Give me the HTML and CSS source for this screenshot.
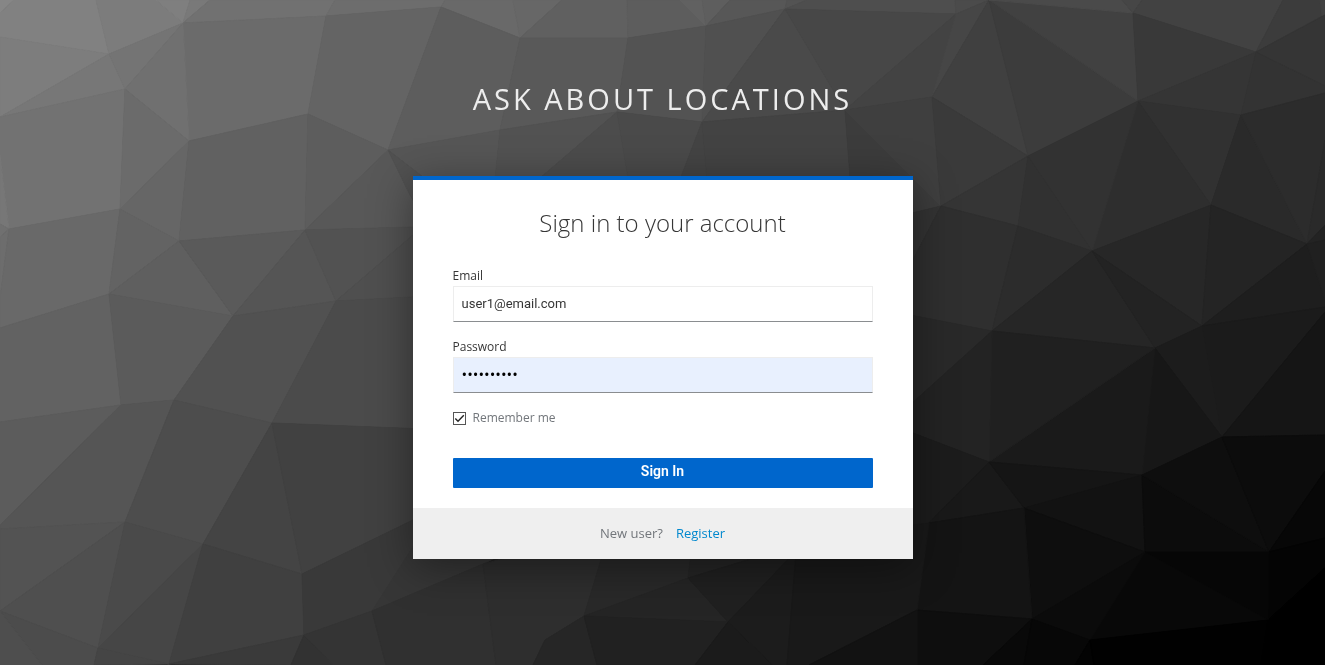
FILE: index.html
```html
<!DOCTYPE html>
<html lang="en">
<head>
<meta charset="utf-8">
<meta name="viewport" content="width=device-width, initial-scale=1">
<title>Sign in to Ask About Locations</title>
<link rel="stylesheet" href="styles.css">
</head>
<body>
<svg class="backdrop" viewBox="0 0 1325 665" preserveAspectRatio="xMidYMid slice" aria-hidden="true">
  <!-- top left -->
  <polygon color="#868686" points="0,0 14,0 0,13"/>
  <polygon color="#818181" points="14,0 96,0 109,54 0,37 0,13"/>
  <polygon color="#7d7d7d" points="0,37 109,54 0,117"/>
  <polygon color="#7c7c7c" points="96,0 156,0 183,23 109,54"/>
  <polygon color="#7f7f7f" points="156,0 190,0 183,23"/>
  <polygon color="#797979" points="190,0 210,0 183,23"/>
  <polygon color="#717171" points="210,0 335,0 326,16 183,23"/>
  <polygon color="#777777" points="0,117 109,54 125,89"/>
  <polygon color="#747474" points="109,54 183,23 125,89"/>
  <polygon color="#6d6d6d" points="335,0 445,0 441,7 326,16"/>
  <polygon color="#6b6b6b" points="183,23 326,16 308,114 189,141"/>
  <polygon color="#707070" points="125,89 183,23 189,141"/>
  <polygon color="#646464" points="326,16 441,7 388,150 308,114"/>
  <polygon color="#727272" points="0,117 125,89 120,209 9,229 0,155"/>
  <polygon color="#777777" points="0,155 9,229 0,224"/>
  <polygon color="#707070" points="0,224 9,229 0,237"/>
  <polygon color="#6b6b6b" points="125,89 189,141 120,209"/>
  <polygon color="#666666" points="120,209 189,141 179,241"/>
  <polygon color="#616161" points="189,141 308,114 305,230 179,241"/>
  <polygon color="#5d5d5d" points="308,114 388,150 305,230"/>
  <polygon color="#6d6d6d" points="0,237 9,229 0,298"/>
  <polygon color="#696969" points="9,229 120,209 109,294 0,328 0,298"/>
  <polygon color="#636363" points="120,209 179,241 109,294"/>
  <polygon color="#5f5f5f" points="109,294 179,241 233,316"/>
  <polygon color="#5a5a5a" points="179,241 305,230 233,316"/>
  <polygon color="#555555" points="305,230 336,301 233,316"/>
  <polygon color="#585858" points="305,230 388,150 414,203 450,226"/>
  <polygon color="#525252" points="305,230 450,226 413,235 336,301"/>
  <polygon color="#4f4f4f" points="336,301 413,235 450,226 450,295"/>
  <!-- lower left -->
  <polygon color="#626262" points="0,328 109,294 121,405 0,422"/>
  <polygon color="#5b5b5b" points="109,294 233,316 174,400 121,405"/>
  <polygon color="#515151" points="233,316 336,301 272,423 174,400"/>
  <polygon color="#4b4b4b" points="336,301 450,295 450,430 272,423"/>
  <polygon color="#5c5c5c" points="0,422 121,405 0,525"/>
  <polygon color="#555555" points="0,525 121,405 174,400 125,522 0,529"/>
  <polygon color="#4d4d4d" points="174,400 272,423 203,544 125,522"/>
  <polygon color="#444444" points="272,423 302,574 203,544"/>
  <polygon color="#414141" points="272,423 450,430 450,504 413,520 302,574"/>
  <polygon color="#535353" points="0,529 125,522 0,611"/>
  <polygon color="#4f4f4f" points="0,611 125,522 98,648"/>
  <polygon color="#4a4a4a" points="125,522 203,544 98,648"/>
  <polygon color="#464646" points="98,648 203,544 169,664"/>
  <polygon color="#4c4c4c" points="0,611 98,648 94,665 42,665"/>
  <polygon color="#4e4e4e" points="0,611 42,665 0,665"/>
  <polygon color="#454545" points="98,648 169,664 94,665"/>
  <polygon color="#404040" points="203,544 302,574 304,635 169,664"/>
  <polygon color="#393939" points="302,574 413,520 450,504 450,578 372,611 304,635"/>
  <polygon color="#3a3a3a" points="169,664 304,635 291,665"/>
  <polygon color="#323232" points="291,665 304,635 333,665"/>
  <polygon color="#343434" points="304,635 372,611 386,665 333,665"/>
  <!-- top centre -->
  <polygon color="#696969" points="441,7 445,0 513,0 520,38"/>
  <polygon color="#676767" points="513,0 562,0 520,38"/>
  <polygon color="#606060" points="562,0 627,0 628,38 520,38"/>
  <polygon color="#5d5d5d" points="627,0 680,0 706,26 628,38"/>
  <polygon color="#616161" points="680,0 702,0 706,26"/>
  <polygon color="#5e5e5e" points="702,0 730,0 706,26"/>
  <polygon color="#575757" points="730,0 787,0 785,9 706,26"/>
  <polygon color="#535353" points="787,0 807,0 785,9"/>
  <polygon color="#4e4e4e" points="807,0 955,0 956,14 785,9"/>
  <polygon color="#4b4b4b" points="955,0 989,0 956,14"/>
  <polygon color="#5d5d5d" points="441,7 520,38 500,130 388,150"/>
  <polygon color="#595959" points="520,38 628,38 617,112 500,130"/>
  <polygon color="#535353" points="628,38 706,26 702,122 617,112"/>
  <polygon color="#505050" points="706,26 785,9 702,122"/>
  <polygon color="#4a4a4a" points="785,9 845,110 702,122"/>
  <polygon color="#474747" points="785,9 956,14 845,110"/>
  <polygon color="#434343" points="956,14 932,97 845,110"/>
  <polygon color="#464646" points="956,14 989,0 932,97"/>
  <polygon color="#565656" points="388,150 500,130 494,190 440,190"/>
  <polygon color="#515151" points="388,150 440,190 440,240 410,195"/>
  <polygon color="#525252" points="500,130 617,112 526,190 494,190"/>
  <polygon color="#4c4c4c" points="617,112 630,190 526,190"/>
  <polygon color="#4a4a4a" points="617,112 702,122 676,190 630,190"/>
  <polygon color="#444444" points="702,122 708,190 676,190"/>
  <polygon color="#434343" points="702,122 845,110 851,190 708,190"/>
  <polygon color="#3c3c3c" points="845,110 941,206 900,216 851,190"/>
  <polygon color="#3f3f3f" points="845,110 932,97 941,206"/>
  <!-- top right -->
  <polygon color="#404040" points="989,0 1028,156 932,97"/>
  <polygon color="#3a3a3a" points="932,97 1028,156 941,206"/>
  <polygon color="#3c3c3c" points="989,0 1138,101 1028,156"/>
  <polygon color="#414141" points="989,0 1133,13 1138,101"/>
  <polygon color="#4a4a4a" points="989,0 1122,0 1133,13"/>
  <polygon color="#464646" points="1122,0 1142,0 1133,13"/>
  <polygon color="#424242" points="1133,13 1142,0 1283,0 1256,52"/>
  <polygon color="#3c3c3c" points="1283,0 1320,0 1322,16 1256,52"/>
  <polygon color="#414141" points="1320,0 1325,0 1325,15 1322,16"/>
  <polygon color="#353535" points="1256,52 1325,15 1325,86"/>
  <polygon color="#393939" points="1133,13 1256,52 1138,101"/>
  <polygon color="#353535" points="1256,52 1241,115 1138,101"/>
  <polygon color="#333333" points="1256,52 1325,86 1325,93 1241,115"/>
  <polygon color="#313131" points="1138,101 1241,115 1211,205"/>
  <polygon color="#2e2e2e" points="1138,101 1211,205 1092,251"/>
  <polygon color="#323232" points="1138,101 1092,251 1028,156"/>
  <polygon color="#353535" points="941,206 1028,156 1018,226"/>
  <polygon color="#313131" points="1028,156 1092,251 1018,226"/>
  <polygon color="#333333" points="900,216 941,206 900,285"/>
  <polygon color="#2f2f2f" points="941,206 1018,226 992,331 900,313 900,285"/>
  <polygon color="#2c2c2c" points="1018,226 1092,251 992,331"/>
  <polygon color="#2a2a2a" points="1241,115 1307,244 1211,205"/>
  <polygon color="#2c2c2c" points="1241,115 1325,93 1325,140 1307,244"/>
  <polygon color="#2a2a2a" points="1325,140 1325,225 1307,244"/>
  <polygon color="#232323" points="1325,225 1325,240 1307,244"/>
  <polygon color="#272727" points="1211,205 1202,326 1092,251"/>
  <polygon color="#242424" points="1211,205 1307,244 1202,326"/>
  <polygon color="#262626" points="1092,251 1155,348 992,331"/>
  <polygon color="#232323" points="1092,251 1202,326 1155,348"/>
  <polygon color="#1e1e1e" points="1307,244 1325,300 1325,307 1202,326"/>
  <polygon color="#202020" points="1307,244 1325,240 1325,300"/>
  <polygon color="#1b1b1b" points="1202,326 1325,307 1325,312 1222,437"/>
  <polygon color="#151515" points="1325,312 1325,435 1222,437"/>
  <!-- lower right -->
  <polygon color="#1c1c1c" points="1202,326 1222,437 1155,348"/>
  <polygon color="#171717" points="1155,348 1222,437 1142,475"/>
  <polygon color="#1a1a1a" points="1155,348 1142,475 989,462"/>
  <polygon color="#202020" points="992,331 1155,348 989,462"/>
  <polygon color="#292929" points="900,313 992,331 900,414"/>
  <polygon color="#232323" points="900,414 992,331 989,462 900,428"/>
  <polygon color="#1c1c1c" points="900,428 989,462 929,523 900,528"/>
  <polygon color="#191919" points="989,462 1024,508 929,523"/>
  <polygon color="#151515" points="989,462 1142,475 1024,508"/>
  <polygon color="#121212" points="1024,508 1142,475 1145,552"/>
  <polygon color="#0c0c0c" points="1142,475 1269,552 1145,552"/>
  <polygon color="#0e0e0e" points="1142,475 1222,437 1269,552"/>
  <polygon color="#0c0c0c" points="1222,437 1325,435 1325,471 1269,552"/>
  <polygon color="#070707" points="1325,471 1325,538 1269,552"/>
  <polygon color="#040404" points="1269,552 1325,538 1325,568 1268,620"/>
  <polygon color="#000000" points="1325,568 1325,665 1261,665 1268,620"/>
  <polygon color="#060606" points="1145,552 1269,552 1268,620"/>
  <polygon color="#080808" points="1145,552 1268,620 1090,640"/>
  <polygon color="#0e0e0e" points="1024,508 1145,552 1032,619"/>
  <polygon color="#0b0b0b" points="1145,552 1090,640 1032,619"/>
  <polygon color="#141414" points="929,523 1024,508 1032,619 917,610"/>
  <polygon color="#0e0e0e" points="917,610 1032,619 983,665 917,665"/>
  <polygon color="#090909" points="1032,619 1024,665 983,665"/>
  <polygon color="#070707" points="1032,619 1090,640 1075,665 1024,665"/>
  <polygon color="#030303" points="1090,640 1094,665 1075,665"/>
  <polygon color="#010101" points="1090,640 1268,620 1261,665 1094,665"/>
  <!-- bottom centre -->
  <polygon color="#363636" points="372,611 430,520 530,540 483,564"/>
  <polygon color="#303030" points="372,611 483,564 496,665 386,665"/>
  <polygon color="#2e2e2e" points="483,564 610,530 584,616 545,640 533,665 496,665"/>
  <polygon color="#292929" points="610,530 694,530 688,578 584,616"/>
  <polygon color="#252525" points="694,530 830,535 688,578"/>
  <polygon color="#252525" points="584,616 688,578 728,622"/>
  <polygon color="#202020" points="688,578 830,535 728,622"/>
  <polygon color="#262626" points="584,616 597,665 533,665 545,640"/>
  <polygon color="#212121" points="584,616 728,622 695,665 597,665"/>
  <polygon color="#1b1b1b" points="728,622 773,665 695,665"/>
  <polygon color="#1c1c1c" points="728,622 797,550 787,665 773,665"/>
  <polygon color="#191919" points="797,540 929,523 917,610 809,665 787,665"/>
  <polygon color="#121212" points="917,610 917,665 809,665"/>
</svg>

<div class="page">
  <header class="brand">Ask About Locations</header>
  <main class="card">
    <h1 class="card-title">Sign in to your account</h1>
    <form class="form">
      <div class="field">
        <label class="label" for="email">Email</label>
        <input class="input" id="email" type="text" value="user1@email.com">
      </div>
      <div class="field">
        <label class="label" for="password">Password</label>
        <input class="input input-filled" id="password" type="password" value="abcdefghij">
      </div>
      <label class="remember" for="remember">
        <span class="tick">
          <input class="tick-box" id="remember" type="checkbox" checked>
          <svg class="tick-mark" viewBox="0 0 13 13" aria-hidden="true"><path d="M2.3 6.5 5 9.2 10.8 3.2" fill="none" stroke="#222" stroke-width="1.4"/></svg>
        </span>
        Remember me
      </label>
      <button class="submit" type="button">Sign In</button>
    </form>
    <footer class="signup">
      <span>New user?</span>
      <a class="link" href="#register">Register</a>
    </footer>
  </main>
</div>
</body>
</html>
```

FILE: styles.css
```css
* {
  box-sizing: border-box;
}

body {
  margin: 0;
  background: #222;
  font-family: "Open Sans", "Noto Sans", sans-serif;
  color: #363636;
}

.backdrop {
  position: fixed;
  inset: 0;
  z-index: -1;
  width: 100%;
  height: 100%;
}

.backdrop polygon {
  fill: currentColor;
  stroke: currentColor;
  stroke-width: 1px;
  stroke-linejoin: round;
}

.page {
  display: flex;
  flex-direction: column;
  align-items: center;
  min-height: 100vh;
}

.brand {
  padding: 81px 10px 60px;
  color: #ededed;
  font-size: 29px;
  line-height: 35px;
  letter-spacing: 3px;
  text-align: center;
  text-transform: uppercase;
}

.card {
  width: 100%;
  max-width: 500px;
  border-top: 4px solid #06c;
  background: #fff;
  box-shadow: 0 8px 40px rgba(0, 0, 0, 0.4);
}

.card-title {
  margin: 0;
  padding: 27px 40px 0;
  font-size: 24px;
  font-weight: 300;
  line-height: 31px;
  text-align: center;
}

.form {
  display: flex;
  flex-direction: column;
  gap: 15px;
  padding: 28px 40px 20px;
}

.field {
  display: flex;
  flex-direction: column;
  gap: 1px;
}

.label {
  font-size: 12px;
  line-height: 19px;
}

.input {
  width: 100%;
  height: 36px;
  padding: 4px 8px 6px;
  border: 1px solid #ededed;
  border-bottom-color: #8a8d90;
  border-radius: 0;
  outline: none;
  background: #fff;
  color: #363636;
  font-family: Roboto, "Open Sans", sans-serif;
  font-size: 13px;
}

.input-filled {
  background: #e8f0fe;
  color: #000;
  font-family: "Open Sans", sans-serif;
  font-size: 15px;
}

.remember {
  display: flex;
  align-items: center;
  gap: 7px;
  padding-top: 1px;
  color: #72767b;
  font-size: 12px;
  line-height: 18px;
}

.tick {
  display: grid;
}

.tick-box,
.tick-mark {
  grid-area: 1 / 1;
  width: 13px;
  height: 13px;
}

.tick-box {
  margin: 0;
  border: 1px solid #555;
  appearance: none;
}

.tick-mark {
  pointer-events: none;
}

.submit {
  height: 30px;
  margin-top: 16px;
  padding: 0 8px 4px;
  border: 0;
  border-radius: 1px;
  background: #06c;
  color: #fff;
  font-family: Roboto, "Open Sans", sans-serif;
  font-size: 14px;
  font-weight: 600;
}

.signup {
  display: flex;
  justify-content: center;
  gap: 13px;
  padding: 16px 40px 17px;
  background: #efefef;
  color: #72767b;
  font-size: 13px;
  line-height: 18px;
}

.link {
  color: #0088ce;
  text-decoration: none;
}
```
